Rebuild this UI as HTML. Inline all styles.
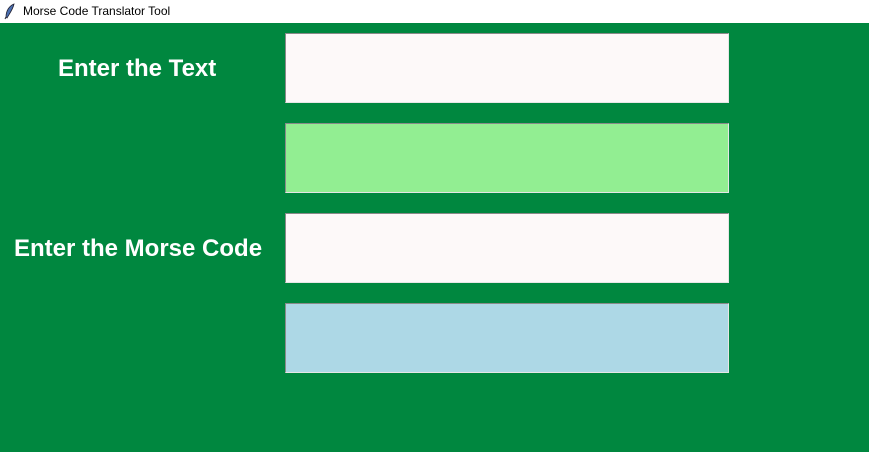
<!DOCTYPE html>
<html><head><meta charset="utf-8"><style>
body{margin:0;width:869px;height:452px;overflow:hidden;background:#00873f;font-family:"Liberation Sans",sans-serif;position:relative}
.tb{position:absolute;left:0;top:0;width:869px;height:23px;background:#fff}
.tb span{position:absolute;left:23px;top:4px;font-size:12px;color:#000}
.box{position:absolute;left:285px;width:442px;height:68px;border-top:1px solid #8a8a8a;border-left:1px solid #8a8a8a;border-bottom:1px solid #e6e6e6;border-right:1px solid #e6e6e6}
.lbl{position:absolute;color:#fff;font-weight:bold;font-size:24px}
</style></head><body>
<div class="tb"><svg style="position:absolute;left:4px;top:3px" width="12" height="17" viewBox="0 0 12 17"><path d="M10 1 C5 3 2 8 2 14 L3 15 C6 10 9 6 10 1Z" fill="#4a6fb0" stroke="#223" stroke-width="0.8"/><path d="M2 14 L1 16" stroke="#223"/></svg><span>Morse Code Translator Tool</span></div>
<div class="lbl" style="left:58px;top:55px">Enter the Text</div>
<div class="lbl" style="left:14px;top:235px">Enter the Morse Code</div>
<div class="box" style="top:33px;background:#fdf9f9"></div>
<div class="box" style="top:123px;background:#92ee92"></div>
<div class="box" style="top:213px;background:#fdf9f9"></div>
<div class="box" style="top:303px;background:#add8e6"></div>
</body></html>
